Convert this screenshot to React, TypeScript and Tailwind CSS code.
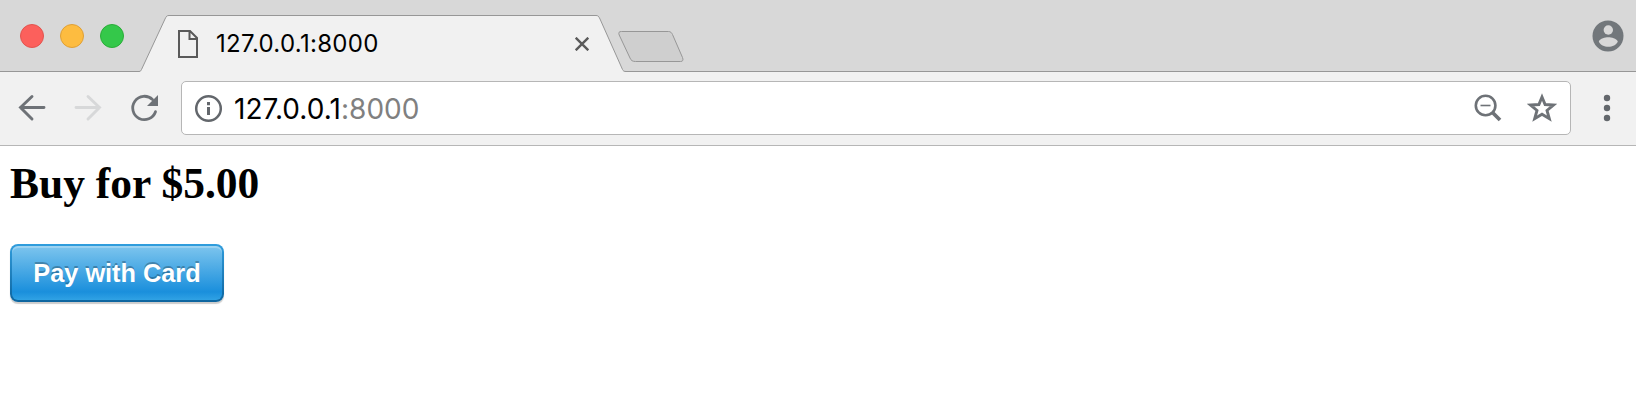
import type { ReactNode } from 'react';

function TrafficLights() {
  return (
    <div className="flex gap-4 pl-5 pt-6">
      <span className="size-6 rounded-full border border-[#e2544f] bg-[#fc605c]" />
      <span className="size-6 rounded-full border border-[#dfa036] bg-[#fdbc40]" />
      <span className="size-6 rounded-full border border-[#2aad38] bg-[#34c84a]" />
    </div>
  );
}

function Tab() {
  return (
    <div className="relative h-[72px] w-[487px] shrink-0">
      <svg className="absolute inset-0" width="487" height="72" viewBox="0 0 487 72" fill="none">
        <path d="M0 71.5C1.5 71.5 2 70.5 2.500 69.500L26 19C27.300 16.200 28 15.500 30 15.500H457C459 15.500 459.700 16.200 461 19L483.500 69.500C484.200 71 485 71.500 487 71.500V72H0Z" fill="#f1f1f1" />
        <path d="M0 71.5C1.5 71.5 2 70.5 2.500 69.500L26 19C27.300 16.200 28 15.500 30 15.500H457C459 15.500 459.700 16.200 461 19L483.500 69.500C484.200 71 485 71.500 487 71.500" stroke="#979797" />
      </svg>
      <div className="relative flex h-full items-start pl-[39px] pt-[30px]">
        <svg width="20" height="28" viewBox="0 0 20 28" fill="none" stroke="#5a5a5a" strokeWidth="2">
          <path d="M1 1H12L19 8V27H1ZM11.500 1V9H19" />
        </svg>
        <span className="ml-[18px] w-[359px] whitespace-nowrap font-['Inter',sans-serif] text-[24px] leading-[28px] tracking-[0.3px] text-black">127.0.0.1:8000</span>
        <svg className="mt-[7px] shrink-0" width="14" height="14" viewBox="0 0 14 14" stroke="#5a5a5a" strokeWidth="2.400">
          <path d="M0.700 0.700L13.300 13.300M13.300 0.700L0.700 13.300" />
        </svg>
      </div>
    </div>
  );
}

function TabStrip() {
  return (
    <div className="flex h-[72px] bg-[#d8d8d8] shadow-[inset_0_-1px_0_#979797]">
      <div className="w-[139px] shrink-0"><TrafficLights /></div>
      <Tab />
      <svg className="-ml-[9px] mt-[30px] shrink-0" width="68" height="34" viewBox="0 0 68 34">
        <path d="M4.500 1.500H51.500C53.500 1.500 54.500 2.500 55.500 4.500L65.500 27.500C66.500 30 66 31.500 63.500 31.500H18.500C15.500 31.500 14 30.500 13 28L2.200 5C1.200 2.500 2 1.500 4.500 1.500Z" fill="#cfcfcf" stroke="#979797" />
      </svg>
      <svg className="ml-auto mr-3 mt-5 shrink-0" width="32" height="32" viewBox="0 0 32 32">
        <circle cx="16" cy="16" r="15.500" fill="#72777b" />
        <circle cx="16.300" cy="10" r="4.700" fill="#d8d8d8" />
        <path d="M6.800 21.500C8.300 18.300 13 17.300 16.300 17.300S24.300 18.300 25.800 21.500C24.500 25 20.300 26.800 16.300 26.800S8.100 25 6.800 21.500Z" fill="#d8d8d8" />
      </svg>
    </div>
  );
}

function Icon({ className, width, children }: { className: string; width: number; children: ReactNode }) {
  return <svg className={`shrink-0 ${className}`} width={width} height="30" viewBox={`0 0 ${width} 30`} fill="none">{children}</svg>;
}

function Toolbar() {
  return (
    <div className="flex h-[74px] items-start border-b border-[#b6b6b6] bg-[#f1f1f1]">
      <Icon className="ml-[18px] mt-[21px]" width={28}>
        <path d="M14 3.500L2.500 14.500L14 26M2.500 14.500H26" stroke="#6e7277" strokeWidth="2.900" strokeLinecap="round" />
      </Icon>
      <Icon className="ml-[28px] mt-[21px]" width={28}>
        <path d="M14 3.500L25.500 14.500L14 26M25.500 14.500H2" stroke="#d7d8d9" strokeWidth="2.900" strokeLinecap="round" />
      </Icon>
      <Icon className="ml-[28px] mt-[21px]" width={30}>
        <path d="M25.500 18.700A11.700 11.700 0 1 1 22.500 6.500" stroke="#6e7277" strokeWidth="2.800" strokeLinecap="round" />
        <path d="M28 2V13H17Z" fill="#6e7277" />
      </Icon>
      <div className="ml-[21px] mt-[9px] flex h-[54px] w-[1390px] shrink-0 items-center rounded-[5px] border border-[#b6b6b6] bg-white">
        <Icon className="ml-3" width={30}>
          <circle cx="14.500" cy="15.500" r="12.300" stroke="#63676c" strokeWidth="2.500" />
          <path d="M14.500 9V12.200M14.500 14V22" stroke="#63676c" strokeWidth="3" />
        </Icon>
        <span className="ml-[10px] mt-[2px] whitespace-nowrap font-['Inter',sans-serif] text-[28px] leading-[32px] tracking-[0.05px] text-black">127.0.0.1<span className="text-[#808080]">:8000</span></span>
        <Icon className="ml-auto mr-[24px]" width={30}>
          <circle cx="12.600" cy="12.500" r="9.800" stroke="#6e7277" strokeWidth="2.600" />
          <path d="M7.500 12.500H17.500" stroke="#6e7277" strokeWidth="1.600" />
          <path d="M19.500 19.500L27 27" stroke="#6e7277" strokeWidth="3.700" />
        </Icon>
        <Icon className="mr-[13px]" width={30}>
          <path d="M15 4L18.100 11.500L26.500 12L20 17.500L22.300 25.700L15 21.300L7.700 25.700L10 17.500L3.500 12L11.900 11.500Z" stroke="#6e7277" strokeWidth="2.900" />
        </Icon>
      </div>
      <Icon className="ml-[31px] mt-[21px]" width={10}>
        <circle cx="5" cy="5" r="3.200" fill="#63676c" />
        <circle cx="5" cy="15" r="3.200" fill="#63676c" />
        <circle cx="5" cy="25" r="3.200" fill="#63676c" />
      </Icon>
    </div>
  );
}

export default function App() {
  return (
    <div className="h-[402px] w-[1636px] overflow-hidden bg-white">
      <TabStrip />
      <Toolbar />
      <main className="flex flex-col items-start px-[10px] pt-[11px]">
        <h2 className="font-['Liberation_Serif',serif] text-[43.500px] font-bold leading-[52px] text-black">Buy for $5.00</h2>
        <button className="mt-[35px] h-[58px] w-[214px] rounded-[8px] bg-linear-to-b from-[#309ddd] to-[#0d659f] p-[2px] shadow-[0_2px_1px_rgba(0,0,0,0.2)]">
          <span className="flex h-full items-center justify-center rounded-[6px] bg-[linear-gradient(#7dc5ee,#1a8fdc_85%,#30a2e4)] pt-px font-['Liberation_Sans',sans-serif] text-[25.300px] font-bold text-white shadow-[inset_0_2px_0_rgba(255,255,255,0.25)] [text-shadow:0_-2px_0_rgba(0,0,0,0.25)]">Pay with Card</span>
        </button>
      </main>
    </div>
  );
}
